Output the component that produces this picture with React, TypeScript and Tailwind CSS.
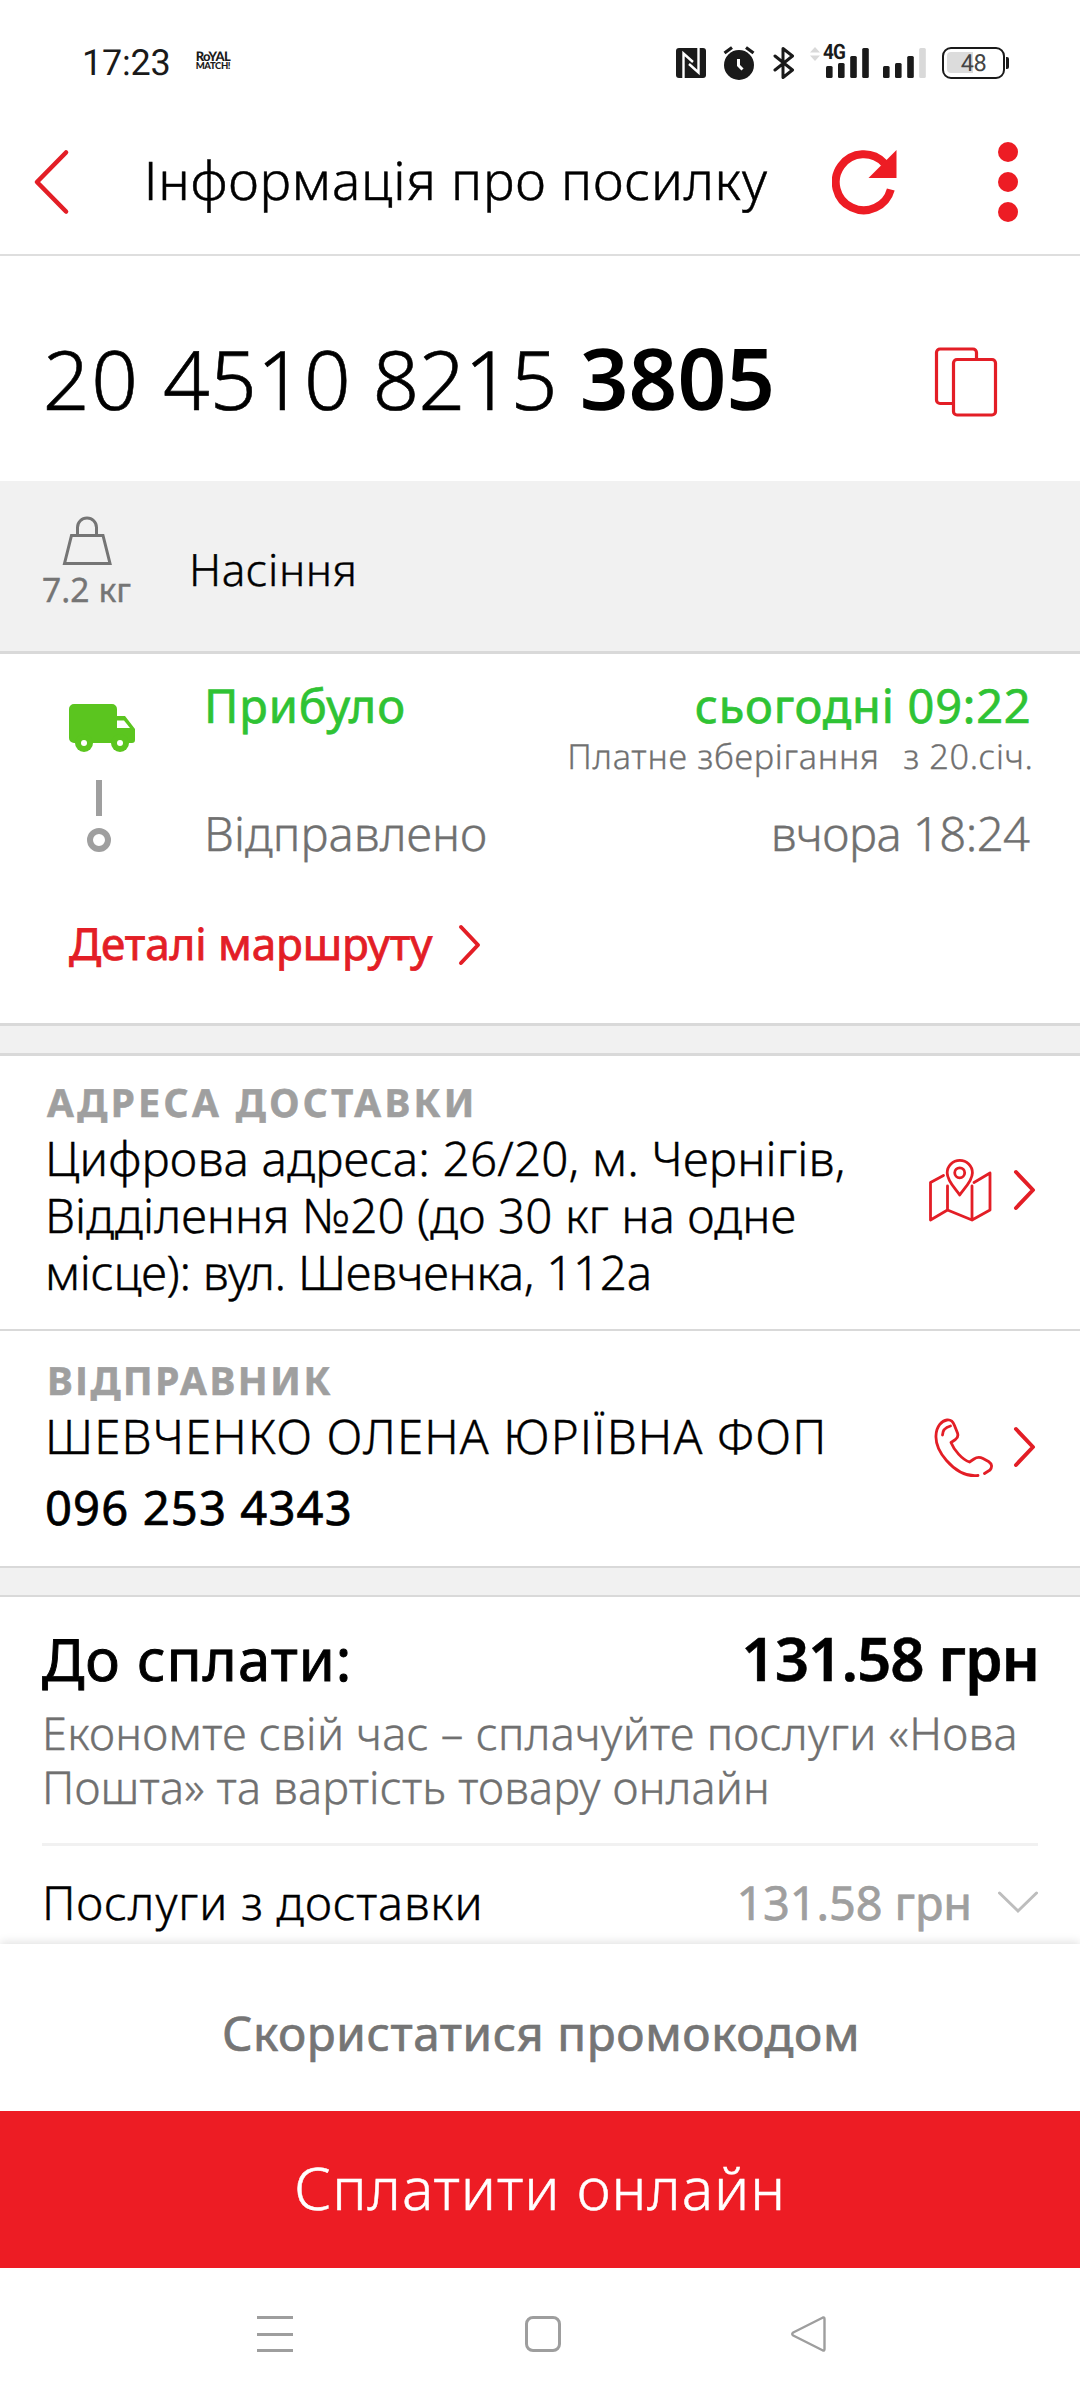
import React from "react";

const RED = "#e31e26";

function ChevronRight({ className = "" }: { className?: string }) {
  return (
    <svg width="24" height="42" viewBox="0 0 24 42" fill="none" className={"shrink-0 " + className}>
      <path d="M3 3 L20 21 L3 39" stroke={RED} strokeWidth="4" strokeLinecap="round" strokeLinejoin="round" />
    </svg>
  );
}

function SignalBars({ weak }: { weak?: boolean }) {
  return (
    <svg width="44" height="32" viewBox="0 0 44 32" fill="#1a1a1a">
      <rect x="0" y="19" width="6.6" height="12" rx="1.5" />
      <rect x="12" y="16" width="6.6" height="15" rx="1.5" />
      <rect x="24.2" y="9" width="6.6" height="22" rx="1.5" />
      <rect x="36.2" y="1" width="6.6" height="30" rx="1.5" fill={weak ? "#d9d9d9" : "#1a1a1a"} />
    </svg>
  );
}

function StatusBar() {
  return (
    <div className="flex h-[104px] items-center pl-[82px] pr-[71px] pt-[21px] text-[#1a1a1a]">
      <span className="font-[Roboto] text-[36px] leading-[40px] tracking-[-0.2px]">17:23</span>
      <div className="ml-[25px] mt-[-3px] flex w-[40px] flex-col font-[Lato] font-black">
        <span className="text-[13px] leading-[12px] tracking-[-0.6px]">RoYAL</span>
        <span className="text-[9.5px] leading-[10px] tracking-[-0.4px]">MATCH!</span>
      </div>
      <div className="ml-auto flex items-center">
        <svg width="30" height="30" viewBox="0 0 30 30" className="mr-[17px]">
          <rect width="30" height="30" rx="3" fill="#1a1a1a" />
          <path d="M7.5 30 V5.5 L17 14" fill="none" stroke="#fff" strokeWidth="2.4" />
          <path d="M22.5 0 V24.5 L13 16" fill="none" stroke="#fff" strokeWidth="2.4" />
        </svg>
        <svg width="32" height="34" viewBox="0 0 32 34" className="mr-[18px]">
          <circle cx="16" cy="19" r="15" fill="#1a1a1a" />
          <path d="M1.5 7 L9 1.5 M30.5 7 L23 1.5" stroke="#1a1a1a" strokeWidth="3.2" />
          <path d="M15.5 13 V19.5 L19.5 23.5" fill="none" stroke="#fff" strokeWidth="3" />
        </svg>
        <svg width="22" height="34" viewBox="0 0 22 34" className="mr-[15px]">
          <path d="M2 10 L19.5 24 L10 31.5 V2.5 L19.5 10 L2 24" fill="none" stroke="#1a1a1a" strokeWidth="3" strokeLinecap="round" strokeLinejoin="round" />
        </svg>
        <svg width="10" height="14" viewBox="0 0 10 14" className="mb-[18px] mr-[6px]" fill="#d9d9d9">
          <path d="M0 5.5 L5 0 L10 5.5 Z M0 8.5 H10 L5 14 Z" />
        </svg>
        <div className="relative mr-[13px]">
          <SignalBars />
          <span className="absolute left-[-3px] top-[-3px] origin-left scale-x-[0.9] font-[Roboto] text-[21px] font-bold leading-[19px] tracking-[-0.8px]">4G</span>
        </div>
        <SignalBars weak />
        <div className="relative ml-[15px] flex h-[32px] w-[63px] items-center justify-center rounded-[9px] border-[2.5px] border-[#1a1a1a]">
          <div className="absolute left-[3px] top-[3px] h-[21px] w-[26px] rounded-l-[4px] bg-[#dcdcdc]" />
          <span className="relative font-[Roboto] text-[23.5px] leading-[24px] tracking-[-0.5px] text-[#444]">48</span>
        </div>
        <div className="ml-px h-[12px] w-[3px] rounded-r-[2px] bg-[#1a1a1a]" />
      </div>
    </div>
  );
}

function Header() {
  return (
    <header className="flex h-[152px] items-center border-b-2 border-[#dedede] pl-[32px] pr-[62px]">
      <svg width="38" height="68" viewBox="0 0 38 68" fill="none" className="mt-[6px]">
        <path d="M34 4.5 L5 34 L34 63.5" stroke={RED} strokeWidth="4.6" strokeLinecap="round" strokeLinejoin="round" />
      </svg>
      <h1 className="ml-[73.7px] mt-[2px] whitespace-nowrap text-[53.2px] font-light leading-[60px] tracking-[0.75px] [-webkit-text-stroke:0.5px]">Інформація про посилку</h1>
      <svg width="66" height="66" viewBox="0 0 66 66" className="ml-auto mt-[6px]">
        <path d="M58.8 40.5 A28 28 0 1 1 52.3 14.2" fill="none" stroke="#ed1c24" strokeWidth="8" />
        <path d="M64.5 1 V29 H36.5 Z" fill="#ed1c24" />
      </svg>
      <div className="ml-[100px] mt-[6px] flex flex-col gap-[10px]">
        <i className="size-[20px] rounded-full bg-[#ed1c24]" />
        <i className="size-[20px] rounded-full bg-[#ed1c24]" />
        <i className="size-[20px] rounded-full bg-[#ed1c24]" />
      </div>
    </header>
  );
}

function TrackingNumber() {
  return (
    <section className="flex h-[225px] items-start pl-[42.7px] pr-[82px] pt-[82px]">
      <div className="flex items-baseline gap-[23px] whitespace-nowrap leading-[80px]">
        <span className="text-[81.9px] font-light tracking-[0.25px] [-webkit-text-stroke:0.6px]">
          <span className="tracking-[1.8px]">20 </span>4510 <span className="tracking-[-0.7px]">8215</span>
        </span>
        <span className="text-[85.4px] font-semibold tracking-[-0.02px]">3805</span>
      </div>
      <svg width="66" height="72" viewBox="0 0 66 72" fill="none" stroke={RED} strokeWidth="3.2" className="ml-auto mt-[8px]">
        <path d="M21.5 57.5 H8 a3.5 3.5 0 0 1 -3.5 -3.5 V6.5 a3.5 3.5 0 0 1 3.5 -3.5 H41 a3.5 3.5 0 0 1 3.5 3.5 V13" />
        <rect x="21.5" y="13.5" width="42" height="55.5" rx="3.5" />
      </svg>
    </section>
  );
}

function Contents() {
  return (
    <section className="flex h-[173px] border-b-[3px] border-[#d9d9d9] bg-[#f1f1f1] pl-[42px]">
      <div className="flex w-[147px] flex-col pt-[35px] text-[#757575]">
        <svg width="50" height="50" viewBox="0 0 50 50" fill="none" stroke="#757575" strokeWidth="3" className="ml-[20px]">
          <path d="M15.5 19 V11.5 a9.5 9.5 0 0 1 19 0 V19 M9.5 19.5 H41 L48 47.5 H2.5 Z" />
        </svg>
        <span className="mt-[3px] text-[33.6px] leading-[40px] tracking-[0.08px] [-webkit-text-stroke:0.4px]">7.2 кг</span>
      </div>
      <span className="pt-[59px] text-[44.4px] font-light leading-[60px] tracking-[0.5px] [-webkit-text-stroke:0.4px]">Насіння</span>
    </section>
  );
}

function Route() {
  return (
    <section className="flex h-[372px] flex-col border-b-[3px] border-[#d9d9d9] pl-[69px] pr-[48.5px]">
      <div className="flex">
        <div className="flex w-[135px] flex-col pt-[50px]">
          <svg width="66" height="48" viewBox="0 0 66 48">
            <path d="M5 0 H43 a5 5 0 0 1 5 5 V12 H56 L66 25 V36 a3 3 0 0 1 -3 3 H5 a5 5 0 0 1 -5 -5 V5 a5 5 0 0 1 5 -5 Z" fill="#5bc51f" />
            <path d="M48 16.5 H55 L61 24 H48 Z" fill="#fff" />
            <circle cx="15" cy="39" r="9" fill="#5bc51f" />
            <circle cx="15" cy="39" r="3" fill="#fff" />
            <circle cx="51" cy="39" r="9" fill="#5bc51f" />
            <circle cx="51" cy="39" r="3" fill="#fff" />
          </svg>
          <div className="ml-[27px] mt-[28px] h-[36px] w-[6px] bg-[#9f9f9f]" />
          <div className="ml-[18px] mt-[12px] size-[24px] rounded-full border-[6px] border-[#9f9f9f]" />
        </div>
        <div className="flex flex-1 flex-col whitespace-nowrap pt-[21px]">
          <div className="flex justify-between text-[46.9px] leading-[60px] text-[#2fc334] [-webkit-text-stroke:0.7px]">
            <span className="tracking-[0.93px]">Прибуло</span>
            <span className="tracking-[0.81px]">сьогодні 09:22</span>
          </div>
          <div className="mr-[-2px] mt-[2px] flex justify-end gap-[23.7px] text-[34.3px] font-light leading-[40px] text-[#707070] [-webkit-text-stroke:0.3px]">
            <span className="tracking-[0.72px]">Платне зберігання</span>
            <span className="tracking-[0.58px]">з 20.січ.</span>
          </div>
          <div className="mr-[2px] mt-[26px] flex justify-between text-[47.3px] font-light leading-[60px] text-[#707070] [-webkit-text-stroke:0.4px]">
            <span className="tracking-[0.03px]">Відправлено</span>
            <span className="tracking-[-0.57px]">вчора 18:24</span>
          </div>
        </div>
      </div>
      <div className="mt-[50px] flex items-center gap-[26px] text-[44.1px] leading-[60px] tracking-[-0.12px] text-[#e31e26] [-webkit-text-stroke:0.8px]">
        Деталі маршруту
        <ChevronRight className="mt-[4px]" />
      </div>
    </section>
  );
}

function Address() {
  return (
    <section className="flex h-[275px] border-b-2 border-[#d9d9d9] pl-[45px] pr-[43px]">
      <div className="whitespace-nowrap pt-[27px]">
        <h2 className="ml-[2px] text-[38.8px] font-bold leading-[40px] tracking-[3.4px] text-[#9f9f9f] [-webkit-text-stroke:0.6px]">АДРЕСА ДОСТАВКИ</h2>
        <div className="mt-[6px] text-[47.6px] font-light leading-[57px] [-webkit-text-stroke:0.4px]">
          <p className="tracking-[0.15px]">Цифрова адреса: 26/20, м. Чернігів,</p>
          <p className="tracking-[0.02px]">Відділення №20 (до 30 кг на одне</p>
          <p className="tracking-[-0.35px]">місце): вул. Шевченка, 112а</p>
        </div>
      </div>
      <svg width="64" height="64" viewBox="0 0 64 64" fill="none" stroke={RED} strokeWidth="2.8" strokeLinecap="round" strokeLinejoin="round" className="ml-auto mt-[102px] shrink-0">
        <path d="M15.5 17.5 L2.5 24.5 V62 L19.5 52 L44 62 L62 52 V15 L46 24.5 M19.5 28 V52 M44 28 V62" />
        <path d="M31.7 37 C27 30 19.2 23 19.2 15 a12.6 12.6 0 0 1 25.2 0 C44.4 23 36.5 30 31.7 37 Z" />
        <circle cx="31.7" cy="14.8" r="5" />
      </svg>
      <ChevronRight className="ml-[21px] mt-[113px]" />
    </section>
  );
}

function Sender() {
  return (
    <section className="flex h-[237px] border-b-2 border-[#d9d9d9] pl-[45px] pr-[43px]">
      <div className="whitespace-nowrap pt-[30px]">
        <h2 className="ml-[2px] text-[38.8px] font-bold leading-[40px] tracking-[2.6px] text-[#9f9f9f] [-webkit-text-stroke:0.6px]">ВІДПРАВНИК</h2>
        <p className="mt-[5px] text-[47.6px] font-light leading-[60px] tracking-[1.08px] [-webkit-text-stroke:0.4px]">ШЕВЧЕНКО ОЛЕНА ЮРІЇВНА ФОП</p>
        <p className="mt-[11px] text-[47.2px] leading-[60px] tracking-[1.11px] [-webkit-text-stroke:0.7px]">096 253 4343</p>
      </div>
      <svg width="60" height="60" viewBox="0 0 60 60" fill="none" stroke={RED} strokeWidth="2.8" strokeLinecap="round" strokeLinejoin="round" className="ml-auto mt-[87px] shrink-0">
        <path d="M44 57.5 C30 59 19 50 12.5 42.5 C6 35 1.5 26 2 17.5 C2.4 8 8 2.5 13 2 C17.5 1.5 19 3.5 20.5 7.5 L23.5 15 C24.5 18 23.5 20 21.5 21.5 L17 24.5 C20 32 28 41.5 35.5 44 L40 41 C43 39 46 39 49 40.5 L54.5 43.5 C58 46 58.5 49 56 52 L50.5 55.5" />
        <path d="M8.5 17 C8.5 12 11 9.5 16.5 8" />
      </svg>
      <ChevronRight className="ml-[19px] mt-[95px]" />
    </section>
  );
}

function Payment() {
  return (
    <section className="relative h-[347px] whitespace-nowrap px-[42px] pt-[28px]">
      <div className="flex items-baseline justify-between leading-[66px]">
        <span className="text-[58.1px] tracking-[1px] [-webkit-text-stroke:0.9px]">До сплати:</span>
        <span className="mr-[-1px] text-[60.2px] font-semibold tracking-[-1.06px] [-webkit-text-stroke:0.5px]">131.58 грн</span>
      </div>
      <div className="mt-[14px] text-[45.2px] font-light leading-[54px] text-[#707070] [-webkit-text-stroke:0.4px]">
        <p className="tracking-[0.26px]">Економте свій час – сплачуйте послуги «Нова</p>
        <p className="tracking-[0.16px]">Пошта» та вартість товару онлайн</p>
      </div>
      <div className="mt-[28px] h-[3px] bg-[#f1f1f1]" />
      <div className="mt-[26px] flex items-center text-[46.9px] leading-[60px]">
        <span className="font-light tracking-[0.78px] [-webkit-text-stroke:0.4px]">Послуги з доставки</span>
        <span className="ml-auto tracking-[-0.11px] text-[#9f9f9f] [-webkit-text-stroke:0.7px]">131.58 грн</span>
        <svg width="40" height="24" viewBox="0 0 40 24" fill="none" className="ml-[26px]">
          <path d="M1.5 3 L20 21 L38.5 3" stroke="#bdbdbd" strokeWidth="3" strokeLinecap="round" />
        </svg>
      </div>
    </section>
  );
}

export default function App() {
  return (
    <main className="h-[2400px] w-[1080px] overflow-hidden bg-white font-['Noto_Sans',sans-serif] text-black [text-rendering:geometricPrecision]">
      <StatusBar />
      <Header />
      <TrackingNumber />
      <Contents />
      <Route />
      <div className="h-[30px] border-b-[3px] border-[#d9d9d9] bg-[#f1f1f1]" />
      <Address />
      <Sender />
      <div className="h-[29px] border-b-2 border-[#d9d9d9] bg-[#f1f1f1]" />
      <Payment />
      <button className="relative flex h-[167px] w-full items-center justify-center whitespace-nowrap bg-white pl-[2px] pt-[10px] text-[47.6px] leading-[60px] tracking-[0.6px] text-[#757575] shadow-[0_-2px_9px_rgba(0,0,0,0.12)] [-webkit-text-stroke:0.7px]">
        Скористатися промокодом
      </button>
      <button className="relative flex h-[157px] w-full items-center justify-center whitespace-nowrap bg-[#ed1c24] pb-[5px] text-[58.8px] font-light leading-[70px] tracking-[0.95px] text-white [-webkit-text-stroke:0.5px]">
        Сплатити онлайн
      </button>
      <nav className="flex h-[132px] items-center pl-[257px] text-[#9e9e9e]">
        <div className="flex h-[36px] w-[36px] flex-col justify-between">
          <i className="h-[3px] bg-current" />
          <i className="h-[3px] bg-current" />
          <i className="h-[3px] bg-current" />
        </div>
        <div className="ml-[232px] size-[36px] rounded-[8px] border-[3px] border-current" />
        <svg width="38" height="38" viewBox="0 0 38 38" fill="none" className="ml-[229px]">
          <path d="M33 2.5 L3.2 17.5 Q1.2 19 3.2 20.5 L33 35.5 Q34.5 36 34.5 34 V4 Q34.5 2 33 2.5 Z" stroke="currentColor" strokeWidth="2.4" strokeLinejoin="round" />
        </svg>
      </nav>
    </main>
  );
}
